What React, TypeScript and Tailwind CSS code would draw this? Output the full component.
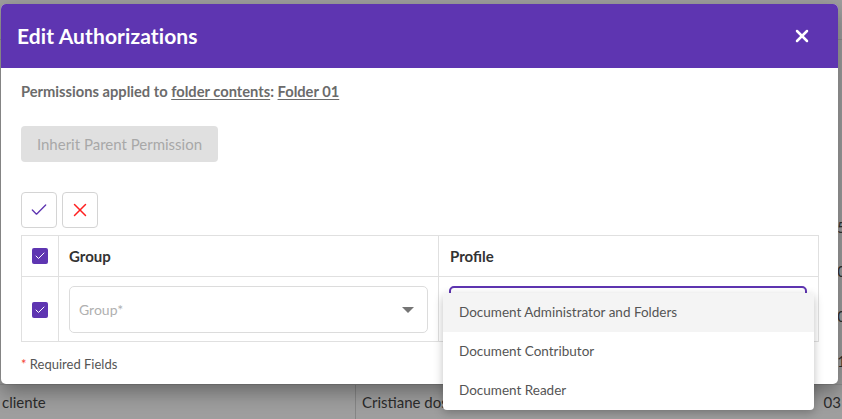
import React from 'react';
import { Check, X } from 'lucide-react';

const font = { fontFamily: 'Lato, "Open Sans", sans-serif' };

const PurpleCheckbox: React.FC = () => (
  <div className="w-4 h-4 rounded-[2px] bg-[#5e35b1] flex items-center justify-center">
    <Check className="w-3 h-3 text-white" strokeWidth={2} />
  </div>
);

export default function App() {
  const [openMenu] = React.useState(true);
  const profiles = ['Document Administrator and Folders', 'Document Contributor', 'Document Reader'];

  return (
    <div className="relative w-[842px] h-[419px] overflow-hidden bg-[#9e9e9e]" style={font}>
      {/* page behind the overlay */}
      <div className="flex flex-col h-full">
        <div className="h-[47px] border-b border-[#8e8e8e]" />
        <div className="flex-1 flex flex-col items-end text-[15px] text-[#2f2f2f]">
          <div className="h-[166px]" />
          <div className="h-[43px] leading-[43px] -mr-[4px]">5</div>
          <div className="h-[45px] leading-[45px] -mr-[4px]">0</div>
          <div className="h-[45px] leading-[45px] -mr-[4px]">0</div>
          <div className="h-[45px] leading-[45px] -mr-[4px]">1</div>
        </div>
        <div className="h-[37px] flex text-[15px] text-[#2b2b2b] border-t border-[#8e8e8e]">
          <div className="w-[356px] pl-[2px] border-r border-[#858585] leading-[34px]">cliente</div>
          <div className="flex-1 pl-[6px] leading-[34px]">Cristiane dos</div>
          <div className="pr-[1px] leading-[34px]">03</div>
        </div>
      </div>

      {/* modal */}
      <div className="absolute left-[1px] top-[4px] w-[837px] h-[380px] bg-white rounded-[5px] shadow-[0_8px_20px_rgba(0,0,0,0.35)] overflow-hidden">
        <div className="h-[64px] bg-[#5e35b1] flex items-center justify-between pl-[16px] pr-[26px]">
          <h2 className="text-white text-[21px] font-bold tracking-[0.1px]">Edit Authorizations</h2>
          <X className="w-[20px] h-[20px] text-white" strokeWidth={3} />
        </div>

        <div className="px-[20px] pt-[14px]">
          <p className="text-[14.7px] font-bold text-[#6b6b6b] leading-[18px]">
            Permissions applied to <span className="underline underline-offset-2">folder contents</span>:{' '}
            <span className="underline underline-offset-2">Folder 01</span>
          </p>

          <button className="mt-[26px] h-[36px] w-[197px] rounded-[4px] bg-[#e0e0e0] text-[#a8a8a8] text-[15px]">
            Inherit Parent Permission
          </button>

          <div className="mt-[30px] flex gap-[5px]">
            <div className="w-[36px] h-[36px] rounded-[4px] border border-[#d4d4d4] flex items-center justify-center">
              <Check className="w-[20px] h-[20px] text-[#5e35b1]" strokeWidth={1.6} />
            </div>
            <div className="w-[36px] h-[36px] rounded-[4px] border border-[#d4d4d4] flex items-center justify-center">
              <X className="w-[22px] h-[22px] text-[#ff2020]" strokeWidth={1.6} />
            </div>
          </div>

          <div className="mt-[7px] w-[798px] border border-[#e0e0e0]">
            <div className="flex h-[41px] border-b border-[#e0e0e0] text-[15px] font-bold text-[#333]">
              <div className="w-[37px] border-r border-[#e0e0e0] flex items-center justify-center">
                <PurpleCheckbox />
              </div>
              <div className="w-[380px] border-r border-[#e0e0e0] flex items-center pl-[10px]">Group</div>
              <div className="flex-1 flex items-center pl-[11px]">Profile</div>
            </div>
            <div className="flex h-[64px]">
              <div className="w-[37px] border-r border-[#e0e0e0] flex items-center justify-center pt-[2px]">
                <PurpleCheckbox />
              </div>
              <div className="w-[380px] border-r border-[#e0e0e0] flex items-start pl-[10px] pr-[10px] pt-[9px]">
                <div className="w-full h-[47px] rounded-[5px] border border-[#dcdcdc] flex items-center justify-between pl-[9px] pr-[13px]">
                  <span className="text-[14px] text-[#b0b0b0]">Group*</span>
                  <span className="w-0 h-0 border-l-[6px] border-r-[6px] border-t-[6px] border-l-transparent border-r-transparent border-t-[#757575]" />
                </div>
              </div>
              <div className="flex-1 flex items-start pl-[10px] pr-[11px] pt-[9px]">
                <div className="w-full h-[47px] rounded-[5px] border-2 border-[#5e35b1]" />
              </div>
            </div>
          </div>

          <p className="mt-[13px] text-[13px] text-[#555]">
            <span className="text-[#f44336]">*</span> Required Fields
          </p>
        </div>
      </div>

      {/* profile dropdown */}
      {openMenu && (
        <ul className="absolute left-[443px] top-[293px] w-[371px] bg-white rounded-[4px] shadow-[0_3px_10px_rgba(0,0,0,0.25)] overflow-hidden">
          {profiles.map((p, i) => (
            <li
              key={p}
              className={`h-[39px] flex items-center pl-[16px] text-[13.5px] text-[#555] ${i === 0 ? 'bg-[#f4f4f4]' : ''}`}
            >
              {p}
            </li>
          ))}
        </ul>
      )}
    </div>
  );
}
